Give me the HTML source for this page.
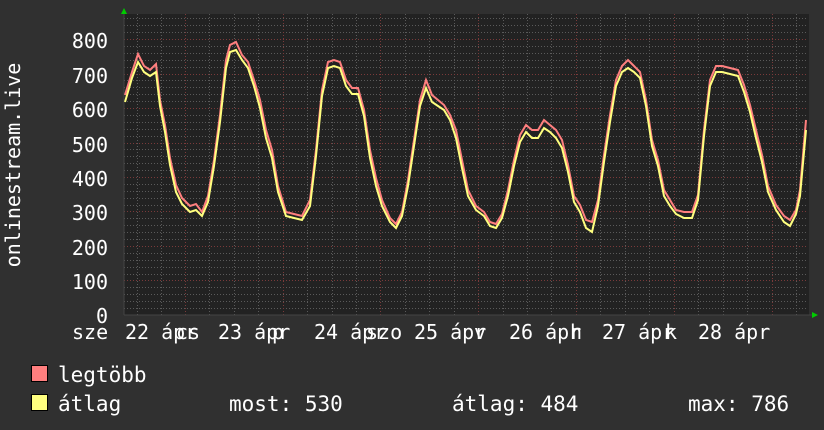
<!DOCTYPE html>
<html><head><meta charset="utf-8"><style>
html,body{margin:0;padding:0;background:#303030;}
svg{display:block}
text{font-family:"DejaVu Sans Mono","Liberation Mono",monospace;fill:#fff;font-size:20px}
.lg{font-size:21px}
</style></head><body>
<svg width="824" height="430" viewBox="0 0 824 430" xmlns="http://www.w3.org/2000/svg">
<rect width="824" height="430" fill="#303030"/>
<rect x="124" y="14" width="685" height="301" fill="#222"/>
<g stroke="#5a5a5a" stroke-width="1" stroke-dasharray="1,2">
<path d="M124 308.5H808M124 301.5H808M124 294.5H808M124 287.5H808M124 274.5H808M124 267.5H808M124 260.5H808M124 253.5H808M124 239.5H808M124 232.5H808M124 225.5H808M124 218.5H808M124 205.5H808M124 198.5H808M124 191.5H808M124 184.5H808M124 170.5H808M124 163.5H808M124 156.5H808M124 149.5H808M124 136.5H808M124 129.5H808M124 122.5H808M124 115.5H808M124 101.5H808M124 94.5H808M124 87.5H808M124 80.5H808M124 67.5H808M124 60.5H808M124 53.5H808M124 46.5H808M124 32.5H808M124 25.5H808M124 18.5H808"/>
<path d="M137.5 14V315M161.5 14V315M209.5 14V315M234.5 14V315M258.5 14V315M307.5 14V315M332.5 14V315M356.5 14V315M405.5 14V315M429.5 14V315M454.5 14V315M503.5 14V315M527.5 14V315M551.5 14V315M600.5 14V315M625.5 14V315M649.5 14V315M698.5 14V315M723.5 14V315M747.5 14V315M796.5 14V315"/>
</g>
<g stroke="#7a3a3a" stroke-width="1" stroke-dasharray="1,2">
<path d="M124 280.5H808M124 246.5H808M124 211.5H808M124 177.5H808M124 143.5H808M124 108.5H808M124 74.5H808M124 39.5H808"/>
<path d="M185.5 14V315M283.5 14V315M380.5 14V315M478.5 14V315M576.5 14V315M674.5 14V315M772.5 14V315"/>
</g>
<line x1="124" y1="315" x2="812" y2="315" stroke="#444" />
<line x1="124" y1="12" x2="124" y2="315" stroke="#444"/>
<polygon points="121,14 127,14 124,8" fill="#0c0"/>
<polygon points="812,312 812,318 818,315" fill="#0c0"/>
<polyline fill="none" stroke="#ff7f7f" stroke-width="2" points="125,95 132,72 138,54 144,66 150,70 156,64 160,100 165,125 170,158 176,185 182,198 190,206 196,204 202,212 208,196 214,160 220,115 226,60 230,45 236,42 242,55 248,62 254,80 260,100 266,130 272,150 278,186 286,212 294,214 302,216 310,200 316,150 322,90 328,62 334,60 340,62 346,80 352,88 358,88 364,110 370,150 376,178 382,200 390,218 396,224 402,212 408,180 414,140 420,100 426,80 432,95 438,100 444,105 450,115 456,130 462,160 468,190 476,206 484,212 490,222 496,224 502,214 508,190 514,160 520,135 526,125 532,130 538,130 544,120 550,125 556,130 562,140 568,165 574,196 580,205 586,220 592,222 598,200 604,155 610,115 616,80 622,66 628,60 634,66 640,72 646,100 652,140 658,160 664,190 670,200 676,210 684,212 692,212 698,195 704,130 710,80 716,66 722,66 730,68 738,70 744,85 750,105 756,130 762,155 768,186 776,205 784,216 790,220 796,210 800,190 806,120"/>
<polyline fill="none" stroke="#ffff7f" stroke-width="2" points="125,102 132,78 138,62 144,72 150,76 156,72 160,106 165,132 170,165 176,192 182,204 190,212 196,210 202,216 208,202 214,166 220,122 226,68 230,52 236,50 242,60 248,68 254,86 260,108 266,138 272,158 278,192 286,216 294,218 302,220 310,206 316,156 322,96 328,68 334,66 340,68 346,86 352,94 358,94 364,116 370,158 376,186 382,206 390,222 396,228 402,216 408,186 414,146 420,106 426,88 432,102 438,106 444,110 450,120 456,138 462,168 468,196 476,210 484,216 490,226 496,228 502,218 508,196 514,166 520,142 526,132 532,138 538,138 544,128 550,132 556,138 562,148 568,172 574,202 580,212 586,228 592,232 598,206 604,162 610,122 616,86 622,72 628,68 634,72 640,78 646,106 652,146 658,166 664,196 670,206 676,214 684,218 692,218 698,200 704,136 710,86 716,72 722,72 730,74 738,76 744,92 750,112 756,138 762,162 768,192 776,210 784,222 790,226 796,214 800,196 806,130"/>
<g text-anchor="end">
<text x="108" y="48">800</text><text x="108" y="83">700</text><text x="108" y="117">600</text><text x="108" y="152">500</text><text x="108" y="186">400</text><text x="108" y="220">300</text><text x="108" y="255">200</text><text x="108" y="289">100</text><text x="108" y="323">0</text>
</g>
<text transform="translate(20,165) rotate(-90)" text-anchor="middle">onlinestream.live</text>
<g>
<text x="72" y="339">sze</text>
<text x="125" y="339">22 ápr</text><text x="176" y="339">cs</text>
<text x="218" y="339">23 ápr</text><text x="272" y="339">p</text>
<text x="314" y="339">24 ápr</text><text x="366" y="339">szo</text>
<text x="414" y="339">25 ápr</text><text x="474" y="339">v</text>
<text x="509" y="339">26 ápr</text><text x="570" y="339">h</text>
<text x="602" y="339">27 ápr</text><text x="665" y="339">k</text>
<text x="698" y="339">28 ápr</text>
</g>
<rect x="31.5" y="365.5" width="16" height="16" fill="#ff7f7f" stroke="#000"/>
<rect x="31.5" y="394.5" width="16" height="16" fill="#ffff7f" stroke="#000"/>
<text class="lg" x="58" y="382">legtöbb</text>
<text class="lg" x="58" y="411">átlag</text>
<text class="lg" x="229" y="411">most: 530</text>
<text class="lg" x="452" y="411">átlag: 484</text>
<text class="lg" x="688" y="411">max: 786</text>
</svg>
</body></html>
